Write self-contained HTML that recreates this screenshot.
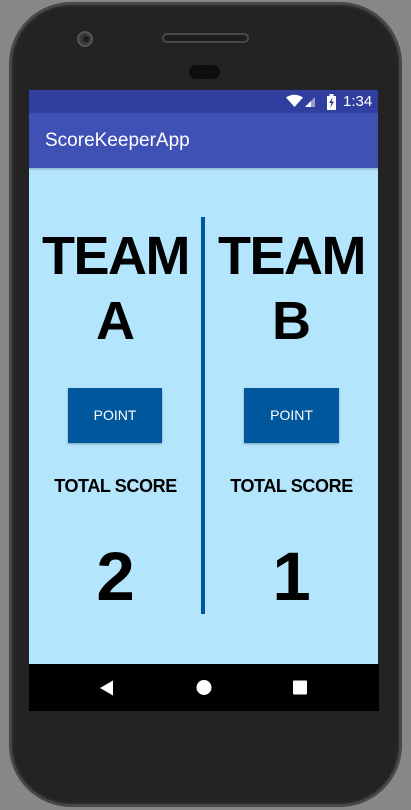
<!DOCTYPE html>
<html><head><style>
*{margin:0;padding:0;box-sizing:border-box}
body{width:411px;height:810px;background:#878787;position:relative;overflow:hidden;font-family:"Liberation Sans",sans-serif}
.phone{position:absolute;left:9px;top:2px;width:393px;height:805px;background:#242222;border-radius:62px;border:3px solid #4a4846;box-shadow:inset 0 0 0 2px #2c2a29}
.abs{position:absolute}
.t{position:absolute;line-height:1;font-weight:bold;color:#000;text-align:center;white-space:nowrap}
</style></head><body>
<div class="phone"></div>
<div class="abs" style="left:77px;top:31px;width:16px;height:16px;border-radius:50%;background:#3a3838;border:2px solid #555"></div>
<div class="abs" style="left:83px;top:36px;width:6px;height:6px;border-radius:50%;background:#1a1a1a"></div>
<div class="abs" style="left:162px;top:33px;width:87px;height:10px;border-radius:5px;background:#1e1d1d;border:2px solid #4a4848"></div>
<div class="abs" style="left:189px;top:65px;width:31px;height:14px;border-radius:7px;background:#0e0e0e"></div>
<div class="abs" style="left:29px;top:90px;width:349px;height:23px;background:#303f9f"></div>
<div class="abs" style="left:29px;top:113px;width:349px;height:55px;background:#3f51b5"></div>
<div class="abs" style="left:29px;top:168px;width:349px;height:496px;background:#b3e5fc"></div>
<div class="abs" style="left:29px;top:168px;width:349px;height:3px;background:linear-gradient(#8fb9cc,#b3e5fc)"></div>
<div class="abs" style="left:29px;top:664px;width:350px;height:47px;background:#000"></div>
<svg class="abs" style="left:286px;top:94px" width="40" height="16" viewBox="0 0 40 16">
<path d="M0 3.5 Q8 -2 17 3.5 L8.5 13 Z" fill="#fff"/>
<path d="M19 13 L29 3 L29 13 Z" fill="#fff" opacity=".5"/>
<path d="M19 13 L25 7 L25 13 Z" fill="#fff"/>
</svg>
<svg class="abs" style="left:326px;top:94px" width="11" height="16" viewBox="0 0 11 16"><rect x="1" y="2" width="9" height="14" fill="#fff"/><rect x="3.5" y="0" width="4" height="2" fill="#fff"/><path d="M6.5 3.5 L3 9 L5.3 9 L4.3 14 L8 7.5 L5.7 7.5 Z" fill="#303f9f"/></svg>
<div class="abs" style="left:343px;top:94px;color:#fff;font-size:15px;line-height:16px">1:34</div>
<div class="abs" style="left:45px;top:130px;color:#fff;font-size:19px;line-height:22px">ScoreKeeperApp</div>
<div class="abs" style="left:201px;top:217px;width:4px;height:397px;background:#01579b"></div>
<div class="t" style="left:29px;width:173px;top:229px;font-size:54px;letter-spacing:-1.5px">TEAM</div>
<div class="t" style="left:29px;width:173px;top:294px;font-size:54px">A</div>
<div class="t" style="left:205px;width:173px;top:229px;font-size:54px;letter-spacing:-1.5px">TEAM</div>
<div class="t" style="left:205px;width:173px;top:294px;font-size:54px">B</div>
<div class="abs" style="left:68px;top:388px;width:94px;height:55px;background:#01579b;box-shadow:0 1px 2px rgba(0,0,0,.3);color:#fff;font-size:14px;line-height:55px;text-align:center">POINT</div>
<div class="abs" style="left:244px;top:388px;width:95px;height:55px;background:#01579b;box-shadow:0 1px 2px rgba(0,0,0,.3);color:#fff;font-size:14px;line-height:55px;text-align:center">POINT</div>
<div class="t" style="left:29px;width:173px;top:477px;font-size:18px;letter-spacing:-0.4px">TOTAL SCORE</div>
<div class="t" style="left:205px;width:173px;top:477px;font-size:18px;letter-spacing:-0.4px">TOTAL SCORE</div>
<div class="t" style="left:29px;width:173px;top:542px;font-size:69px">2</div>
<div class="t" style="left:205px;width:173px;top:542px;font-size:69px">1</div>
<svg class="abs" style="left:98px;top:679px" width="210" height="18" viewBox="0 0 210 18">
<path d="M2 9 L15 1.5 L15 16.5 Z" fill="#fff"/>
<circle cx="106" cy="8.5" r="7.5" fill="#fff"/>
<rect x="195" y="1.5" width="14" height="14" rx="1" fill="#fff"/>
</svg>
</body></html>
